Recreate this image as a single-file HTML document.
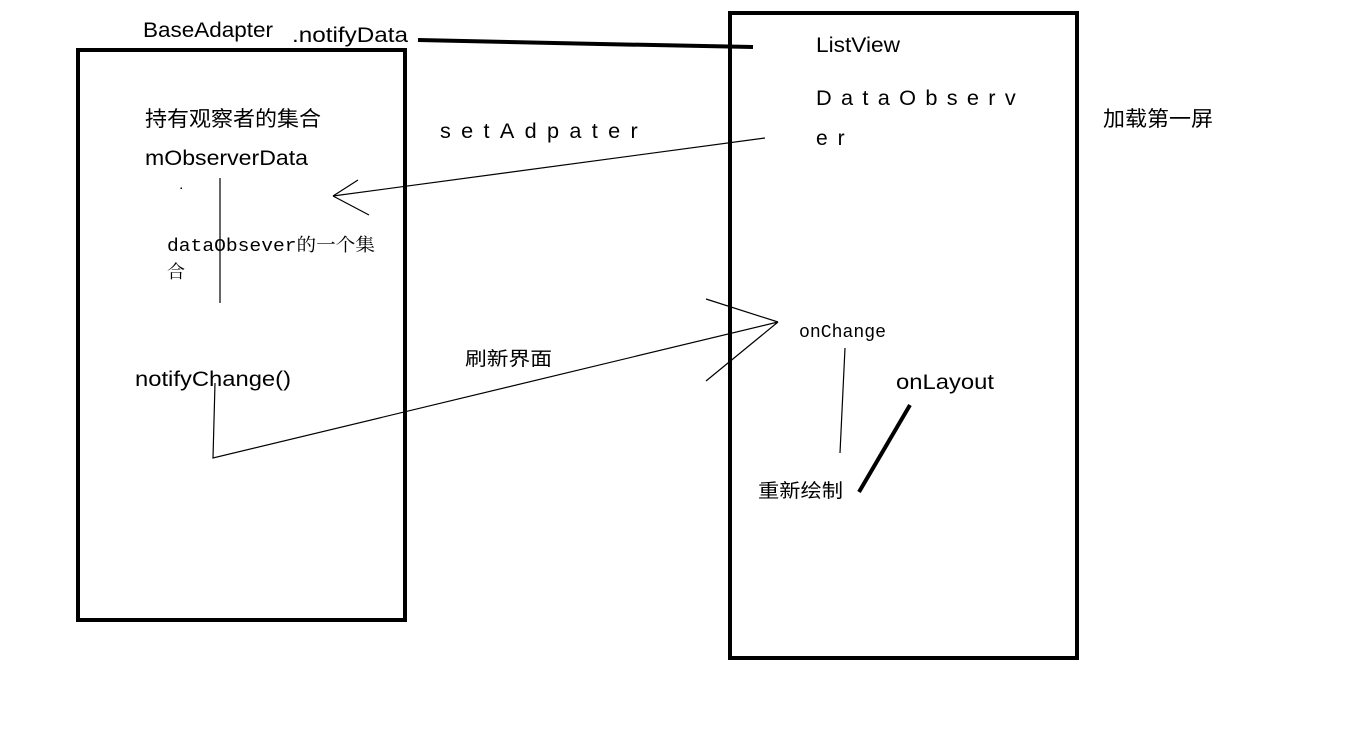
<!DOCTYPE html>
<html><head><meta charset="utf-8"><style>
html,body{margin:0;padding:0;background:#fff;width:1365px;height:741px;overflow:hidden}
svg{display:block}
.s{font-family:"Liberation Sans","Noto Sans CJK SC",sans-serif;fill:#000}
.m{font-family:"Liberation Mono","Noto Serif CJK SC",monospace;fill:#000}
</style></head><body>
<svg width="1365" height="741" viewBox="0 0 1365 741">
<rect x="78" y="50" width="327" height="570" fill="none" stroke="#000" stroke-width="4"/>
<rect x="730" y="13" width="347" height="645" fill="none" stroke="#000" stroke-width="4"/>
<path d="M418 40 L600 44 L753 47" stroke="#000" stroke-width="4" fill="none"/>
<g stroke="#000" stroke-width="1.2" fill="none">
<path d="M765 138 L333 196 M333 196 L358 180 M333 196 L369 215"/>
<path d="M220 178 L220 303"/>
<path d="M215 383 L213 458 L778 322 M706 299 L778 322 M706 381 L778 322"/>
<path d="M845 348 L840 453"/>
</g>
<path d="M910 405 L859 492" stroke="#000" stroke-width="4"/>
<rect x="180.5" y="187.5" width="1.5" height="1.5" fill="#000"/>
<text class="s" x="143" y="37" font-size="21" textLength="130" lengthAdjust="spacingAndGlyphs">BaseAdapter</text>
<text class="s" x="292" y="42" font-size="21" textLength="116" lengthAdjust="spacingAndGlyphs">.notifyData</text>
<text class="s" x="816" y="52" font-size="21" textLength="84" lengthAdjust="spacingAndGlyphs">ListView</text>
<text class="s" x="816" y="105" font-size="21" textLength="209" lengthAdjust="spacingAndGlyphs" letter-spacing="9">DataObserv</text>
<text class="s" x="816" y="145" font-size="21" letter-spacing="10">er</text>
<text class="s" x="1103" y="126" font-size="21" textLength="110" lengthAdjust="spacingAndGlyphs">加载第一屏</text>
<text class="s" x="440" y="138" font-size="21" textLength="208" lengthAdjust="spacingAndGlyphs" letter-spacing="10">setAdpater</text>
<text class="s" x="145" y="126" font-size="21" textLength="176" lengthAdjust="spacingAndGlyphs">持有观察者的集合</text>
<text class="s" x="145" y="165" font-size="21" textLength="163" lengthAdjust="spacingAndGlyphs">mObserverData</text>
<text class="m" x="167" y="251" font-size="18" textLength="208" lengthAdjust="spacingAndGlyphs">dataObsever的一个集</text>
<text class="m" x="167" y="278" font-size="18">合</text>
<text class="s" x="135" y="386" font-size="21" textLength="156" lengthAdjust="spacingAndGlyphs">notifyChange()</text>
<text class="s" x="465" y="365" font-size="19" textLength="87" lengthAdjust="spacingAndGlyphs">刷新界面</text>
<text class="m" x="799" y="337" font-size="18" textLength="87" lengthAdjust="spacingAndGlyphs" font-family="Liberation Serif">onChange</text>
<text class="s" x="896" y="389" font-size="21" textLength="98" lengthAdjust="spacingAndGlyphs">onLayout</text>
<text class="s" x="758" y="497" font-size="19" textLength="85" lengthAdjust="spacingAndGlyphs">重新绘制</text>
</svg>
</body></html>
